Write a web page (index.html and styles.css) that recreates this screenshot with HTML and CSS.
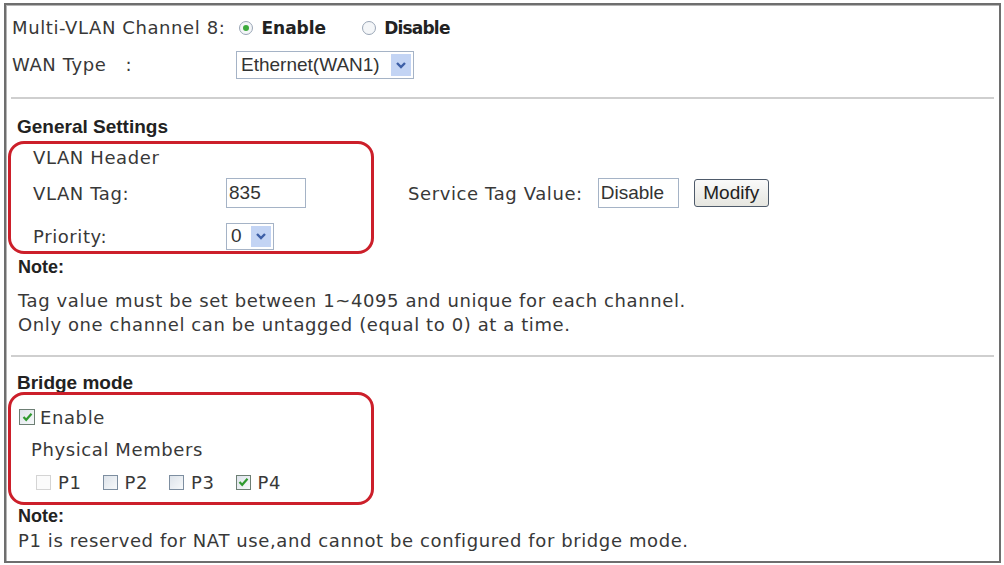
FILE: index.html
```html
<!DOCTYPE html>
<html lang="en">
<head>
    <meta charset="UTF-8">
    <title>Multi-VLAN Channel 8</title>
    <link rel="stylesheet" href="styles.css">
</head>
<body>

<div class="frame">

    <div class="section top">
        <div class="row r1">
            <span class="label">Multi-VLAN Channel 8:</span>
            <span class="radio on"></span><span class="choice">Enable</span>
            <span class="radio second"></span><span class="choice narrow">Disable</span>
        </div>
        <div class="row r2">
            <span class="label wan">WAN Type&nbsp;&nbsp;&nbsp;:</span>
            <div class="select wide">
                <span class="sel-text">Ethernet(WAN1)</span>
                <span class="arrow"><svg width="12" height="8" viewBox="0 0 12 8"><path d="M2 2 L6 6 L10 2" fill="none" stroke="#3d5fa6" stroke-width="2.4"/></svg></span>
            </div>
        </div>
    </div>

    <hr class="divider">

    <div class="section general">
        <div class="mark mark-general"></div>
        <div class="row heading h-general">General Settings</div>
        <div class="row indent vh">VLAN Header</div>
        <div class="row indent tag">
            <span class="field-label">VLAN Tag:</span>
            <input type="text" class="text-box tag-box" value="835">
            <span class="service">Service Tag Value:</span>
            <input type="text" class="text-box service-box" value="Disable">
            <button class="modify">Modify</button>
        </div>
        <div class="row indent prio">
            <span class="field-label">Priority:</span>
            <div class="select small">
                <span class="sel-text">0</span>
                <span class="arrow"><svg width="12" height="8" viewBox="0 0 12 8"><path d="M2 2 L6 6 L10 2" fill="none" stroke="#3d5fa6" stroke-width="2.4"/></svg></span>
            </div>
        </div>
        <div class="row note">Note:</div>
        <div class="row note-text first">Tag value must be set between 1~4095 and unique for each channel.</div>
        <div class="row note-text">Only one channel can be untagged (equal to 0) at a time.</div>
    </div>

    <hr class="divider">

    <div class="section bridge">
        <div class="mark mark-bridge"></div>
        <div class="row heading h-bridge">Bridge mode</div>
        <div class="row enable">
            <span class="check on"><svg width="11" height="10" viewBox="0 0 11 10"><path d="M1.5 5 L4.2 7.8 L9.5 1.8" fill="none" stroke="#2f9a2f" stroke-width="2.2"/></svg></span>
            <span>Enable</span>
        </div>
        <div class="row members">Physical Members</div>
        <div class="row ports">
            <span class="check off"></span><span class="port">P1</span>
            <span class="check"></span><span class="port">P2</span>
            <span class="check"></span><span class="port">P3</span>
            <span class="check on"><svg width="11" height="10" viewBox="0 0 11 10"><path d="M1.5 5 L4.2 7.8 L9.5 1.8" fill="none" stroke="#2f9a2f" stroke-width="2.2"/></svg></span><span class="port">P4</span>
        </div>
        <div class="row note bridge-note">Note:</div>
        <div class="row note-text last">P1 is reserved for NAT use,and cannot be configured for bridge mode.</div>
    </div>

</div>

</body>
</html>
```

FILE: styles.css
```css
body {
    margin: 0;
    background: #fff;
    font-family: "DejaVu Sans", Verdana, sans-serif;
    font-size: 18px;
    letter-spacing: 0.6px;
    color: #383838;
}
.frame {
    margin: 3px 3px 0 4px;
    width: 993px;
    height: 556px;
    border: 2px solid #6e6e6e;
    box-shadow: inset 1px 1px 0 #b5b5b5;
}
.section {
    position: relative;
}
.row {
    display: flex;
    align-items: center;
}
.divider {
    margin: 0 5px;
    border: none;
    border-top: 2px solid #cfcfcf;
}

/* top block */
.section.top {
    padding: 4px 0 14px 6px;
}
.r1, .r2 {
    height: 37px;
}
.label.wan {
    width: 224px;
}
.radio {
    width: 14px;
    height: 14px;
    box-sizing: border-box;
    border: 1px solid #9aa6b6;
    border-radius: 50%;
    background: #f4f6f8;
    margin: 0 8px 0 14px;
    position: relative;
}
.radio.second {
    margin-left: 36px;
}
.radio.on::after {
    content: "";
    position: absolute;
    left: 3px;
    top: 3px;
    width: 6px;
    height: 6px;
    border-radius: 50%;
    background: #3caa3c;
}
.choice {
    font-family: "DejaVu Sans", sans-serif;
    font-weight: bold;
    font-size: 17px;
    letter-spacing: 0;
    color: #222;
}
.choice.narrow {
    letter-spacing: -0.8px;
}
.select {
    display: flex;
    align-items: center;
    border: 1px solid #a5b3c6;
    background: #fff;
    box-sizing: border-box;
    padding: 0 2px 0 4px;
    font-family: "Liberation Sans", Arial, sans-serif;
    font-size: 19px;
    letter-spacing: 0;
    color: #333;
}
.select.wide {
    width: 178px;
    height: 28px;
}
.select.small {
    width: 48px;
    height: 27px;
}
.sel-text {
    flex: 1;
}
.arrow {
    display: flex;
    align-items: center;
    justify-content: center;
    width: 20px;
    height: calc(100% - 4px);
    background: #c3d4f4;
}

/* general settings */
.heading {
    font-family: "Liberation Sans", Arial, sans-serif;
    font-weight: bold;
    font-size: 19px;
    letter-spacing: 0;
    color: #222;
    padding-left: 11px;
}
.general {
    padding: 13px 0 19px;
}
.h-general {
    height: 30px;
}
.indent {
    padding-left: 27px;
}
.vh {
    height: 30px;
}
.tag {
    height: 42px;
}
.prio {
    height: 44px;
}
.field-label {
    width: 193px;
}
.text-box {
    box-sizing: border-box;
    height: 30px;
    border: 1px solid #a5b3c6;
    font-family: "Liberation Sans", Arial, sans-serif;
    font-size: 19px;
    color: #333;
    padding: 0 2px;
}
.tag-box {
    width: 80px;
}
.service {
    margin-left: 102px;
    margin-right: 15px;
}
.service-box {
    width: 81px;
}
.modify {
    margin-left: 15px;
    width: 75px;
    height: 28px;
    border: 1px solid #4e5a6a;
    border-radius: 3px;
    background: linear-gradient(#fafafa, #e6e6e0);
    font-family: "Liberation Sans", Arial, sans-serif;
    font-size: 19px;
    color: #222;
    padding: 0;
}
.note {
    font-family: "Liberation Sans", Arial, sans-serif;
    font-weight: bold;
    font-size: 18px;
    letter-spacing: 0;
    color: #222;
    padding-left: 12px;
    height: 18px;
}
.note-text {
    padding-left: 12px;
    height: 24px;
}
.note-text.first {
    margin-top: 12px;
}

/* red annotation marks */
.mark {
    position: absolute;
    left: 2px;
    width: 366px;
    height: 113px;
    box-sizing: border-box;
    border: 3px solid #cc1f2a;
    border-radius: 16px;
}
.mark-general {
    top: 42px;
}
.mark-bridge {
    top: 35px;
}

/* bridge mode */
.bridge {
    padding-top: 11px;
}
.h-bridge {
    height: 30px;
}
.enable {
    height: 38px;
    padding-left: 13px;
}
.check {
    display: inline-flex;
    align-items: center;
    justify-content: center;
    width: 15px;
    height: 15px;
    box-sizing: border-box;
    border: 1px solid #7d8ea0;
    background: linear-gradient(135deg, #dde3ea, #f7f9fa);
    margin-right: 7px;
}
.enable .check {
    width: 16px;
    height: 16px;
    margin-right: 5px;
}
.check.off {
    border-color: #d4d4d4;
    background: #fbfbfb;
}
.check.on {
    border-color: #6d7f74;
}
.members {
    height: 26px;
    padding-left: 25px;
}
.ports {
    height: 40px;
    padding-left: 30px;
}
.port {
    margin-right: 21px;
}
.bridge-note {
    height: 28px;
}
.last {
    height: 20px;
}
```
